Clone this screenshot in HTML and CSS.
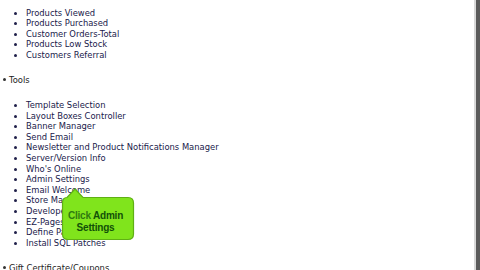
FILE: index.html
```html
<!DOCTYPE html>
<html lang="en">
<head>
    <meta charset="UTF-8">
    <title>Admin Menu</title>
    <link rel="stylesheet" href="styles.css">
</head>
<body>

<div class="page">
    <div class="content">
        <ul class="menu">
            <li class="cont">
                <ul class="sub first">
                    <li>Products Viewed</li>
                    <li>Products Purchased</li>
                    <li>Customer Orders-Total</li>
                    <li>Products Low Stock</li>
                    <li>Customers Referral</li>
                </ul>
            </li>
            <li class="top">Tools
                <ul class="sub">
                    <li>Template Selection</li>
                    <li>Layout Boxes Controller</li>
                    <li>Banner Manager</li>
                    <li>Send Email</li>
                    <li>Newsletter and Product Notifications Manager</li>
                    <li>Server/Version Info</li>
                    <li>Who's Online</li>
                    <li>Admin Settings</li>
                    <li>Email Welcome</li>
                    <li>Store Manager</li>
                    <li>Developers Tool Kit</li>
                    <li>EZ-Pages</li>
                    <li>Define Pages Editor</li>
                    <li>Install SQL Patches</li>
                </ul>
            </li>
            <li class="top">Gift Certificate/Coupons</li>
        </ul>

        <!-- tutorial callout -->
        <div class="callout">
            <svg width="76" height="56" viewBox="0 0 76 56">
                <path d="M7 11.5 L15 3 L23 11.5 L68 11.5 Q73.5 11.5 73.5 17 L73.5 48 Q73.5 53.5 68 53.5 L8 53.5 Q2.5 53.5 2.5 48 L2.5 17 Q2.5 11.5 7 11.5 Z"
                      fill="#80e41c" stroke="#5fb014" stroke-width="1.2"/>
            </svg>
            <div class="callout-text"><span class="light">Click</span> Admin<br>Settings</div>
        </div>
    </div>
    <div class="edge"></div>
</div>

</body>
</html>
```

FILE: styles.css
```css
html, body {
    margin: 0;
    padding: 0;
    background-color: #ffffff;
    overflow: hidden;
}

.page {
    display: flex;
    width: 480px;
    height: 270px;
}

.content {
    flex: 1;
    position: relative;
    font-family: 'DejaVu Sans', Verdana, sans-serif;
    font-size: 8.4px;
    line-height: 10.6px;
    color: #222;
}

.menu {
    margin: 0;
    padding-left: 9px;
    list-style: none;
}

/* outer bullets drawn by hand so they stay inside the page */
.menu li.top::before {
    content: "";
    display: inline-block;
    width: 3px;
    height: 3px;
    border-radius: 50%;
    background-color: #333;
    margin-left: -6.5px;
    margin-right: 3.5px;
    vertical-align: 1.5px;
}

.sub {
    margin: 14.5px 0;
    padding-left: 17px;
    list-style: disc;
    color: #20204a;
}

.sub.first {
    margin-top: 7.5px;
}

.callout {
    position: absolute;
    left: 60px;
    top: 186px;
    width: 76px;
    height: 56px;
}

.callout svg {
    display: block;
}

.callout-text {
    position: absolute;
    left: 0;
    top: 23.5px;
    width: 71px;
    text-align: center;
    font-family: 'Liberation Sans', Arial, sans-serif;
    font-size: 10px;
    letter-spacing: -0.2px;
    line-height: 12px;
    font-weight: bold;
    color: #125008;
}

.callout-text .light {
    color: #2f7a10;
}

.edge {
    width: 4px;
    background-color: #5a5a5a;
    border-left: 2px solid #d8d8d8;
}
```
